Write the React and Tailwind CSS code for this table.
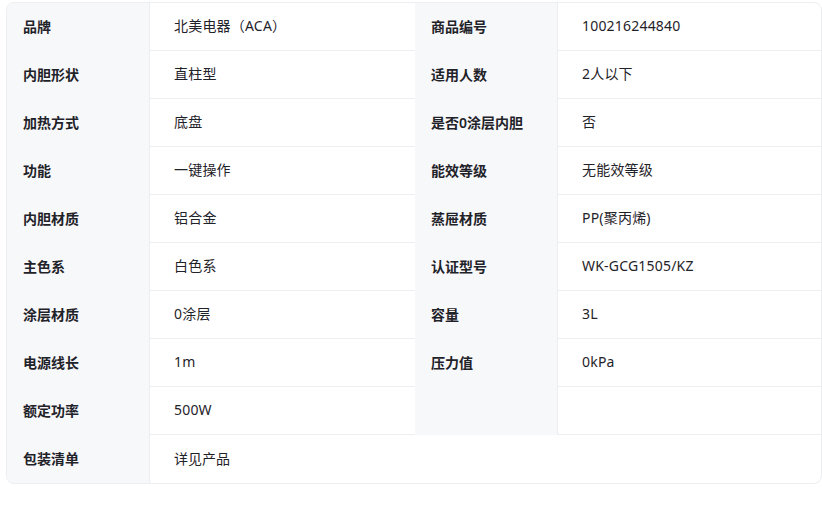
import React from "react";

const rows = [
  ["品牌", "北美电器（ACA）", "商品编号", "100216244840"],
  ["内胆形状", "直柱型", "适用人数", "2人以下"],
  ["加热方式", "底盘", "是否0涂层内胆", "否"],
  ["功能", "一键操作", "能效等级", "无能效等级"],
  ["内胆材质", "铝合金", "蒸屉材质", "PP(聚丙烯)"],
  ["主色系", "白色系", "认证型号", "WK-GCG1505/KZ"],
  ["涂层材质", "0涂层", "容量", "3L"],
  ["电源线长", "1m", "压力值", "0kPa"],
  ["额定功率", "500W", "", ""],
];

const label =
  "h-[48px] flex items-center pl-4 pb-[2px] bg-[#f7f8fa] border-r border-[#eceef1] font-semibold text-[#1f2329]";
const value =
  "h-[48px] flex items-center pl-6 pb-[2px] border-b border-[#eceef1] text-[#1f2329] tracking-[0.2px]";

export default function App() {
  return (
    <div
      className="bg-white w-[822px] h-[507px] pt-[2px] pl-[6px]"
      style={{ fontFamily: '"Noto Sans", "Noto Sans CJK SC", sans-serif' }}
    >
      <div className="w-[816px] border border-[#eceef1] rounded-lg overflow-hidden text-[14px]">
        <div className="grid grid-cols-[143px_265px_143px_1fr]">
          {rows.map((r, i) => (
            <React.Fragment key={i}>
              <div className={label}>{r[0]}</div>
              <div className={value}>{r[1]}</div>
              <div className={label}>{r[2]}</div>
              <div className={value}>{r[3]}</div>
            </React.Fragment>
          ))}
          <div className={label}>包装清单</div>
          <div className="col-span-3 h-[48px] flex items-center pl-6 pb-[2px] text-[#1f2329]">
            详见产品
          </div>
        </div>
      </div>
    </div>
  );
}
